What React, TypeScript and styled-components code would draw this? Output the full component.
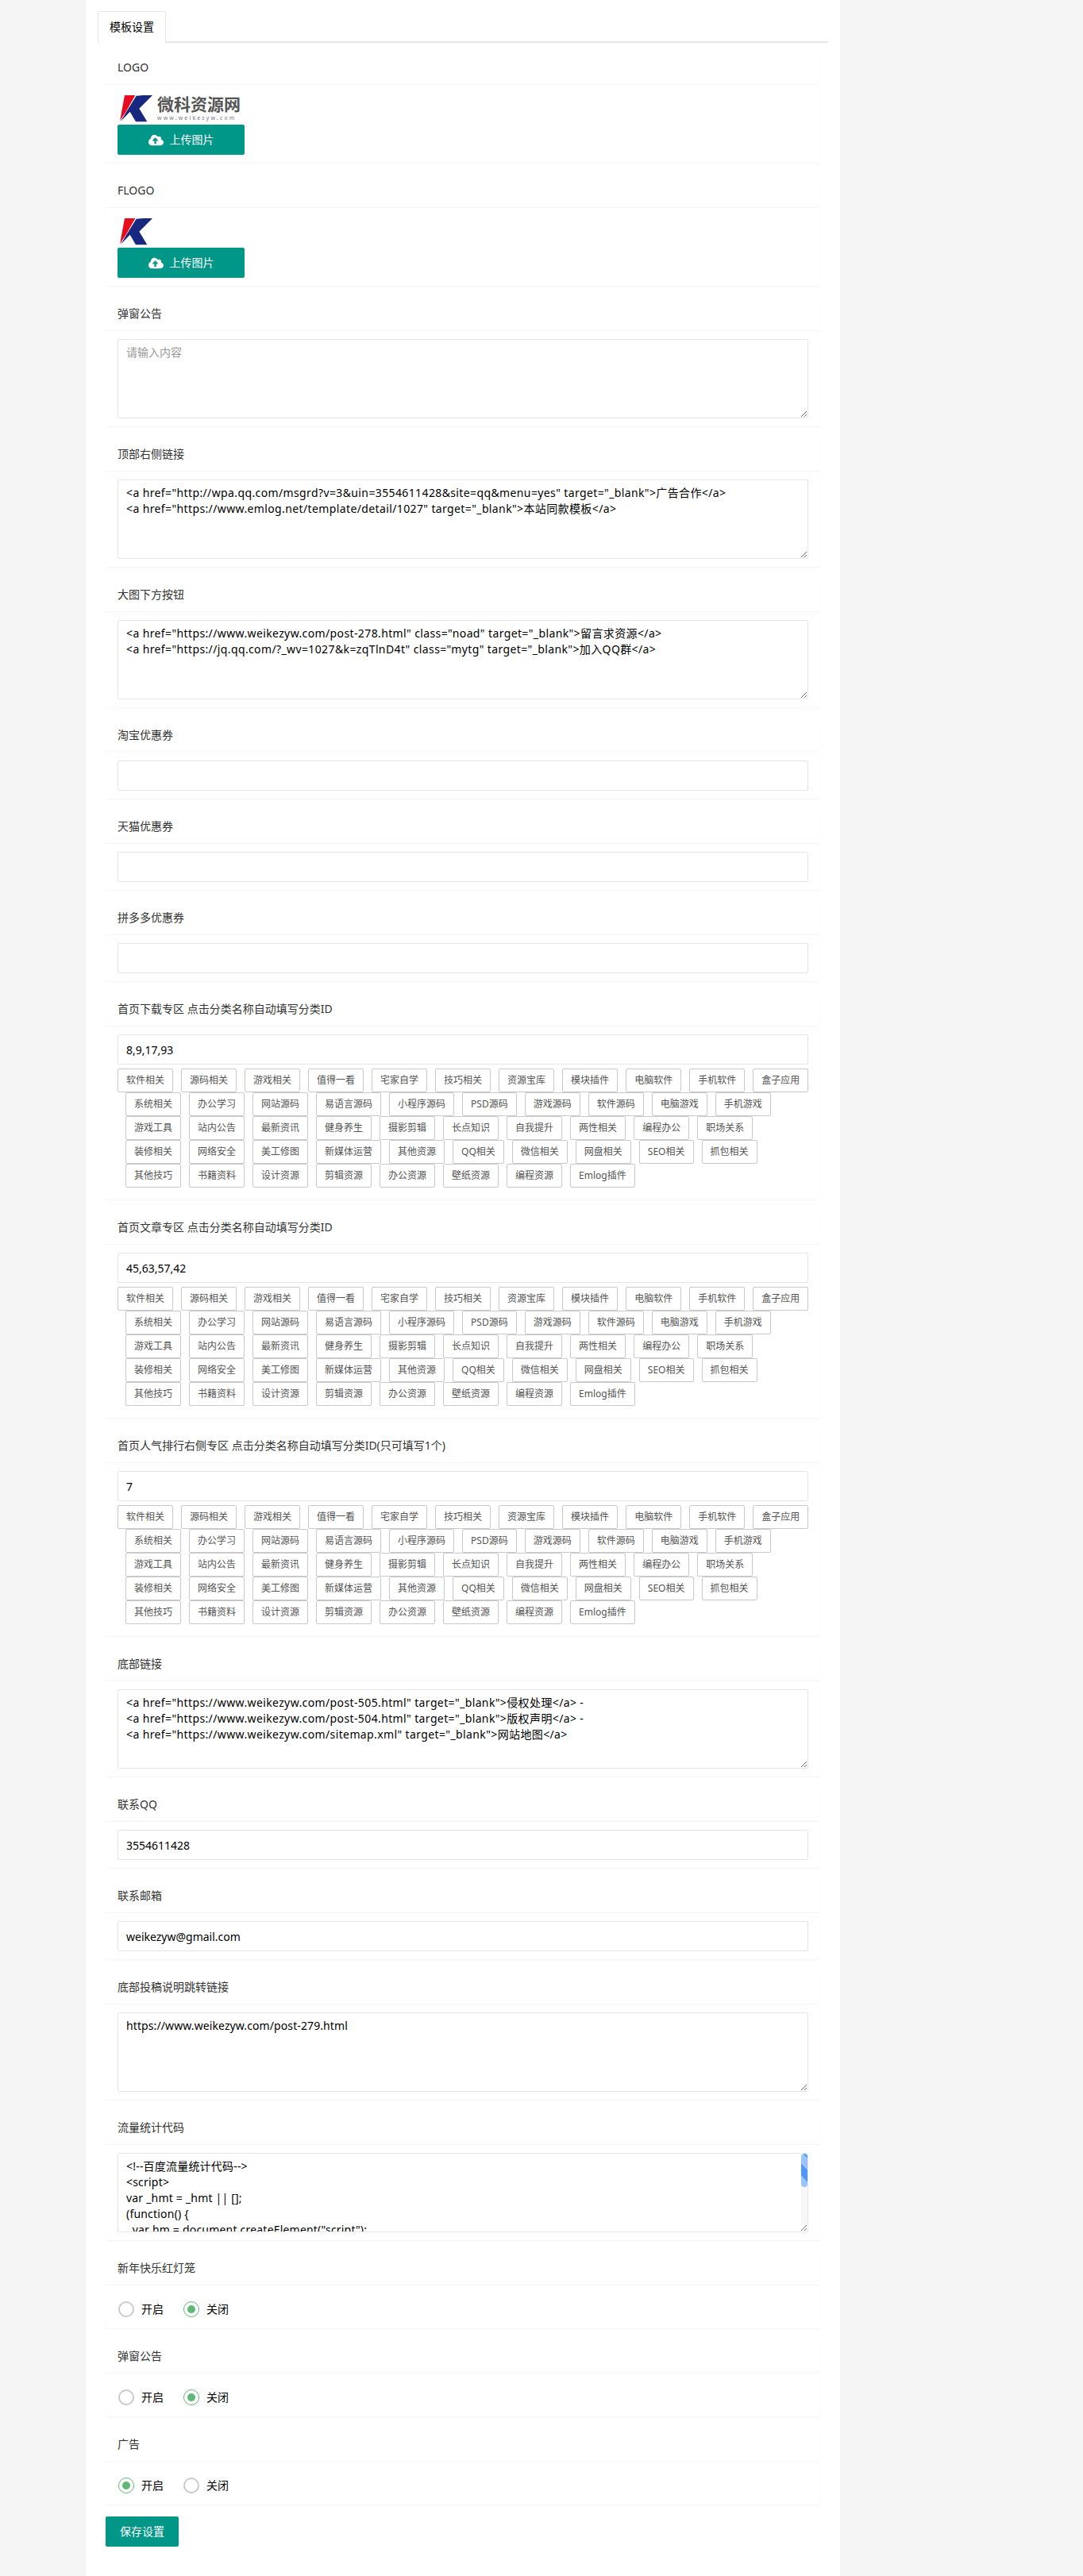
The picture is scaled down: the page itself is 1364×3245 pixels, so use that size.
import React from "react";
import styled, { createGlobalStyle } from "styled-components";
import { FaCloudUploadAlt } from "react-icons/fa";

const Global = createGlobalStyle`
  html, body { margin: 0; padding: 0; background: #f5f5f5; }
  body { font: 14px/24px "Noto Sans", "Noto Sans CJK SC", sans-serif; color: #333; }
  * { box-sizing: border-box; }
`;

const Panel = styled.main`
  width: 950px;
  min-height: 3245px;
  margin-left: 108px;
  padding: 14px 15px 0;
  background: #fff;
`;

const TabBar = styled.div`
  display: flex;
  height: 40px;
  border-bottom: 2px solid #e6e6e6;
  margin-bottom: 11px;
`;

const Tab = styled.div`
  width: 86px;
  height: 40px;
  border: 1px solid #e6e6e6;
  border-bottom: 0;
  border-radius: 2px 2px 0 0;
  background: #fff;
  text-align: center;
  font-size: 14px;
  line-height: 38px;
  color: #000;
`;

const Stack = styled.div`
  display: flex;
  flex-direction: column;
  gap: 15px;
  width: 900px;
  margin-left: 10px;
`;

const Card = styled.section`
  background: #fff;
  border-radius: 2px;
  box-shadow: 0 1px 2px rgba(0, 0, 0, 0.05);
`;

const CardHead = styled.header`
  height: 42px;
  padding: 0 15px;
  border-bottom: 1px solid #f6f6f6;
  line-height: 40px;
  color: #333;
`;

const CardBody = styled.div<{ $extra?: number }>`
  padding: 10px 15px ${(p) => 10 + (p.$extra ?? 0)}px;
`;

const LogoRow = styled.div`
  display: flex;
  align-items: flex-start;
  width: 160px;
  height: 40px;
`;

const LogoWords = styled.div`
  margin-left: 4px;
  padding-top: 1px;
  width: 110px;
`;

const LogoName = styled.div`
  font-size: 21px;
  line-height: 26px;
  font-weight: 700;
  color: #555;
  white-space: nowrap;
`;

const LogoUrl = styled.div`
  font-size: 7px;
  line-height: 9px;
  letter-spacing: 2.15px;
  color: #777;
  white-space: nowrap;
`;

const KMark = styled.svg`
  flex: none;
  margin: 2px 0 0 2px;
`;

const UploadButton = styled.button`
  display: flex;
  align-items: center;
  justify-content: center;
  gap: 8px;
  width: 160px;
  height: 38px;
  padding: 0;
  border: 0;
  border-radius: 2px;
  background: #009688;
  color: #fff;
  font: inherit;
`;

const Field = styled.input`
  display: block;
  width: 100%;
  height: 38px;
  padding: 0 10px;
  border: 1px solid #e6e6e6;
  border-radius: 2px;
  background: #fff;
  font: inherit;
  color: #000;
  outline: 0;
`;

const AreaWrap = styled.div`
  position: relative;
`;

const Area = styled.textarea<{ $track?: number }>`
  display: block;
  width: 100%;
  height: 100px;
  padding: 6px 10px;
  border: 1px solid #e6e6e6;
  border-radius: 2px;
  background: #fff;
  font: inherit;
  line-height: 20px;
  letter-spacing: ${(p) => p.$track ?? 0}px;
  color: #000;
  outline: 0;
  resize: vertical;
  white-space: pre-wrap;
  &::placeholder { color: #999; }
`;

const ScrollTrack = styled.div`
  position: absolute;
  top: 1px;
  right: 1px;
  width: 8px;
  height: 90px;
  border-radius: 4px;
  background: #f7f7f7;
`;

const ScrollThumb = styled.div`
  width: 8px;
  height: 42px;
  border-radius: 4px;
  background: repeating-linear-gradient(45deg, #9bc3fd 0 10.6px, #4e97fd 10.6px 21.2px);
`;

const Tags = styled.div`
  display: flex;
  flex-wrap: wrap;
  margin: 5px -1px 0 0;
`;

const Tag = styled.button`
  height: 30px;
  margin-left: 10px;
  padding: 0 10px;
  border: 1px solid #c9c9c9;
  border-radius: 2px;
  background: #fff;
  color: #555;
  font: inherit;
  font-size: 12px;
  line-height: 28px;
  white-space: nowrap;
  &:first-child { margin-left: 0; }
`;

const RadioBody = styled.div`
  display: flex;
  height: 54px;
  padding: 16px 15px 0 16px;
`;

const RadioItem = styled.label`
  display: flex;
  align-items: center;
  gap: 9px;
  width: 82px;
  height: 28px;
  color: #000;
`;

const Ring = styled.span<{ $on?: boolean }>`
  position: relative;
  width: 20px;
  height: 20px;
  border: ${(p) => (p.$on ? "1.5px solid #5fb878" : "2px solid #c9c9c9")};
  border-radius: 50%;
  background: #fff;
  &::after {
    content: "";
    display: ${(p) => (p.$on ? "block" : "none")};
    position: absolute;
    top: 50%;
    left: 50%;
    width: 10px;
    height: 10px;
    margin: -5px 0 0 -5px;
    border-radius: 50%;
    background: #5fb878;
  }
`;

const SaveButton = styled.button`
  display: block;
  width: 92px;
  height: 38px;
  margin: 15px 0 0 10px;
  padding: 0;
  border: 0;
  border-radius: 2px;
  background: #009688;
  color: #fff;
  font: inherit;
`;

const KLogo = () => (
  <KMark width="44" height="35" viewBox="150 355 130 105">
    <path d="M170 358 210 358 175 420 152 455Z" fill="#e60e1e" />
    <path d="M214 360 240 358 275 358 225 408 255 458 212 458 190 420 155 457 178 418Z" fill="#18287f" />
  </KMark>
);

const TAGS = [
  "软件相关","源码相关","游戏相关","值得一看","宅家自学","技巧相关","资源宝库","模块插件","电脑软件","手机软件","盒子应用",
  "系统相关","办公学习","网站源码","易语言源码","小程序源码","PSD源码","游戏源码","软件源码","电脑游戏","手机游戏",
  "游戏工具","站内公告","最新资讯","健身养生","摄影剪辑","长点知识","自我提升","两性相关","编程办公","职场关系",
  "装修相关","网络安全","美工修图","新媒体运营","其他资源","QQ相关","微信相关","网盘相关","SEO相关","抓包相关",
  "其他技巧","书籍资料","设计资源","剪辑资源","办公资源","壁纸资源","编程资源","Emlog插件",
];

const TagCloud = () => (
  <Tags>
    {TAGS.map((t) => (
      <Tag key={t} type="button">{t}</Tag>
    ))}
  </Tags>
);

const Upload = () => (
  <UploadButton type="button">
    <FaCloudUploadAlt size={19} />
    上传图片
  </UploadButton>
);

const AreaCard = ({ title, value, placeholder, track, bar }: { title: string; value?: string; placeholder?: string; track?: number; bar?: boolean }) => (
  <Card>
    <CardHead>{title}</CardHead>
    <CardBody>
      <AreaWrap>
        <Area readOnly value={value ?? ""} placeholder={placeholder} $track={track} />
        {bar && (
          <ScrollTrack>
            <ScrollThumb />
          </ScrollTrack>
        )}
      </AreaWrap>
    </CardBody>
  </Card>
);

const InputCard = ({ title, value }: { title: string; value?: string }) => (
  <Card>
    <CardHead>{title}</CardHead>
    <CardBody>
      <Field readOnly value={value ?? ""} />
    </CardBody>
  </Card>
);

const TagCard = ({ title, value }: { title: string; value: string }) => (
  <Card>
    <CardHead>{title}</CardHead>
    <CardBody $extra={5}>
      <Field readOnly value={value} />
      <TagCloud />
    </CardBody>
  </Card>
);

const RadioCard = ({ title, on }: { title: string; on: boolean }) => (
  <Card>
    <CardHead>{title}</CardHead>
    <RadioBody>
      <RadioItem><Ring $on={on} />开启</RadioItem>
      <RadioItem><Ring $on={!on} />关闭</RadioItem>
    </RadioBody>
  </Card>
);

const TOP_LINKS = `<a href="http://wpa.qq.com/msgrd?v=3&uin=3554611428&site=qq&menu=yes" target="_blank">广告合作</a>
<a href="https://www.emlog.net/template/detail/1027" target="_blank">本站同款模板</a>`;

const HERO_LINKS = `<a href="https://www.weikezyw.com/post-278.html" class="noad" target="_blank">留言求资源</a>
<a href="https://jq.qq.com/?_wv=1027&k=zqTlnD4t" class="mytg" target="_blank">加入QQ群</a>`;

const FOOT_LINKS = `<a href="https://www.weikezyw.com/post-505.html" target="_blank">侵权处理</a> -
<a href="https://www.weikezyw.com/post-504.html" target="_blank">版权声明</a> -
<a href="https://www.weikezyw.com/sitemap.xml" target="_blank">网站地图</a>`;

const STATS = `<!--百度流量统计代码-->
<script>
var _hmt = _hmt || [];
(function() {
  var hm = document.createElement("script");
  hm.src = "https://hm.baidu.com/hm.js";
  var s = document.getElementsByTagName("script")[0];
  s.parentNode.insertBefore(hm, s);
})();
</script>`;

export default function App() {
  return (
    <>
      <Global />
      <Panel>
        <TabBar><Tab>模板设置</Tab></TabBar>
        <Stack>
          <Card>
            <CardHead>LOGO</CardHead>
            <CardBody>
              <LogoRow>
                <KLogo />
                <LogoWords>
                  <LogoName>微科资源网</LogoName>
                  <LogoUrl>www.weikezyw.com</LogoUrl>
                </LogoWords>
              </LogoRow>
              <Upload />
            </CardBody>
          </Card>
          <Card>
            <CardHead>FLOGO</CardHead>
            <CardBody>
              <LogoRow><KLogo /></LogoRow>
              <Upload />
            </CardBody>
          </Card>
          <AreaCard title="弹窗公告" placeholder="请输入内容" />
          <AreaCard title="顶部右侧链接" value={TOP_LINKS} track={0.38} />
          <AreaCard title="大图下方按钮" value={HERO_LINKS} track={0.38} />
          <InputCard title="淘宝优惠券" />
          <InputCard title="天猫优惠券" />
          <InputCard title="拼多多优惠券" />
          <TagCard title="首页下载专区 点击分类名称自动填写分类ID" value="8,9,17,93" />
          <TagCard title="首页文章专区 点击分类名称自动填写分类ID" value="45,63,57,42" />
          <TagCard title="首页人气排行右侧专区 点击分类名称自动填写分类ID(只可填写1个)" value="7" />
          <AreaCard title="底部链接" value={FOOT_LINKS} track={0.38} />
          <InputCard title="联系QQ" value="3554611428" />
          <InputCard title="联系邮箱" value="weikezyw@gmail.com" />
          <AreaCard title="底部投稿说明跳转链接" value="https://www.weikezyw.com/post-279.html" track={0.1} />
          <AreaCard title="流量统计代码" value={STATS} track={0.2} bar />
          <RadioCard title="新年快乐红灯笼" on={false} />
          <RadioCard title="弹窗公告" on={false} />
          <RadioCard title="广告" on={true} />
        </Stack>
        <SaveButton type="button">保存设置</SaveButton>
      </Panel>
    </>
  );
}
